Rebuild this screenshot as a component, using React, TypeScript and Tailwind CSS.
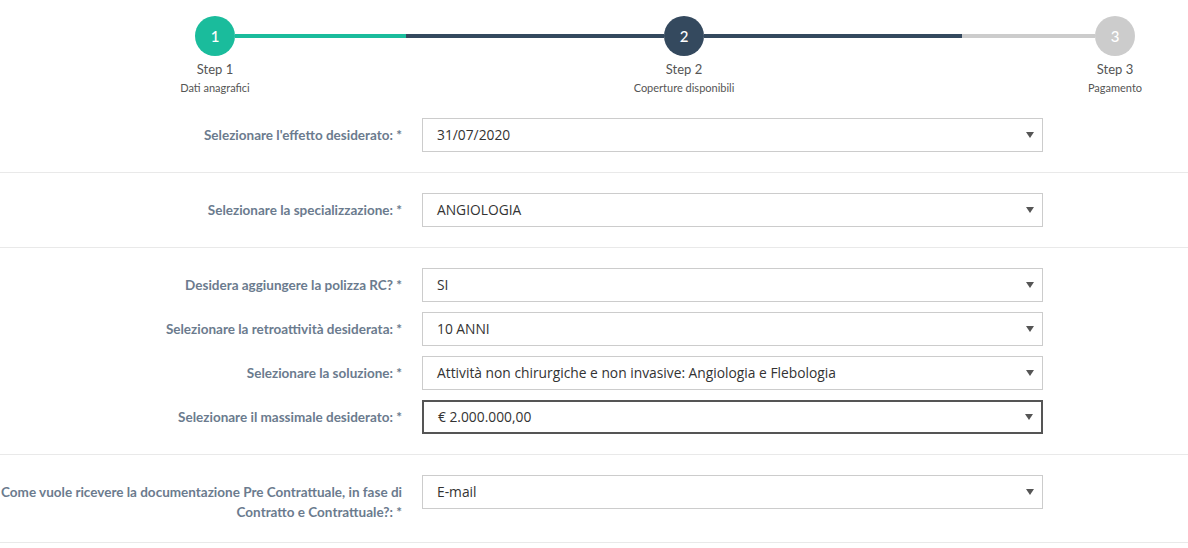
import React from 'react';

type Step = { n: number; title: string; sub: string; circle: string };

const steps: Step[] = [
  { n: 1, title: 'Step 1', sub: 'Dati anagrafici', circle: 'bg-[#1abc9c]' },
  { n: 2, title: 'Step 2', sub: 'Coperture disponibili', circle: 'bg-[#34495e]' },
  { n: 3, title: 'Step 3', sub: 'Pagamento', circle: 'bg-[#cccccc]' },
];

function StepItem({ step }: { step: Step }) {
  return (
    <div className="relative z-10 flex w-[120px] shrink-0 flex-col items-center">
      <div
        className={`flex h-10 w-10 items-center justify-center rounded-full text-[15px] font-medium text-white ${step.circle}`}
      >
        {step.n}
      </div>
      <div className="mt-1 text-[13px] leading-[18px] text-[#555]">{step.title}</div>
      <div className="mt-[2px] whitespace-nowrap text-[11px] leading-4 text-[#555]">{step.sub}</div>
    </div>
  );
}

function Stepper() {
  return (
    <div className="flex h-[98px] items-start pl-[155px] pt-4 font-['Lato',sans-serif]">
      <StepItem step={steps[0]} />
      <div className="-mx-10 mt-[18px] flex h-1 w-[429px] shrink-0">
        <div className="w-[171px] bg-[#1abc9c]" />
        <div className="flex-1 bg-[#34495e]" />
      </div>
      <StepItem step={steps[1]} />
      <div className="-mx-10 mt-[18px] flex h-1 w-[391px] shrink-0">
        <div className="w-[258px] bg-[#34495e]" />
        <div className="flex-1 bg-[#cccccc]" />
      </div>
      <StepItem step={steps[2]} />
    </div>
  );
}

function SelectField({ label, value, focused = false }: { label: string[]; value: string; focused?: boolean }) {
  return (
    <div className="flex items-start">
      <label className="flex w-[402px] shrink-0 flex-col items-end pt-[7px] font-['Lato',sans-serif] text-[13.5px] font-bold leading-5 text-[#6b7b8e]">
        {label.map((line) => (
          <span key={line} className="whitespace-nowrap">
            {line}
          </span>
        ))}
      </label>
      <div className="ml-5 w-[621px]">
        <div
          className={`flex h-[34px] items-center justify-between bg-white pl-[14px] pr-[8px] text-[13.8px] text-[#333] ${
            focused ? 'border-2 border-[#555]' : 'border border-[#cccccc]'
          }`}
        >
          <span>{value}</span>
          <svg width="8" height="6" viewBox="0 0 8 6" className="text-[#555]">
            <path d="M0 0 L8 0 L4 6 Z" fill="currentColor" />
          </svg>
        </div>
      </div>
    </div>
  );
}

function Section({ children }: { children: React.ReactNode }) {
  return <div className="flex flex-col gap-[10px] border-b border-[#e9e9e9] py-5">{children}</div>;
}

export default function App() {
  return (
    <div className="h-[548px] w-[1188px] overflow-hidden bg-white font-['Open_Sans',sans-serif]">
      <Stepper />
      <Section>
        <SelectField label={["Selezionare l'effetto desiderato: *"]} value="31/07/2020" />
      </Section>
      <Section>
        <SelectField label={['Selezionare la specializzazione: *']} value="ANGIOLOGIA" />
      </Section>
      <Section>
        <SelectField label={['Desidera aggiungere la polizza RC? *']} value="SI" />
        <SelectField label={['Selezionare la retroattività desiderata: *']} value="10 ANNI" />
        <SelectField
          label={['Selezionare la soluzione: *']}
          value="Attività non chirurgiche e non invasive: Angiologia e Flebologia"
        />
        <SelectField label={['Selezionare il massimale desiderato: *']} value="€ 2.000.000,00" focused />
      </Section>
      <Section>
        <SelectField
          label={['Come vuole ricevere la documentazione Pre Contrattuale, in fase di', 'Contratto e Contrattuale?: *']}
          value="E-mail"
        />
      </Section>
    </div>
  );
}
